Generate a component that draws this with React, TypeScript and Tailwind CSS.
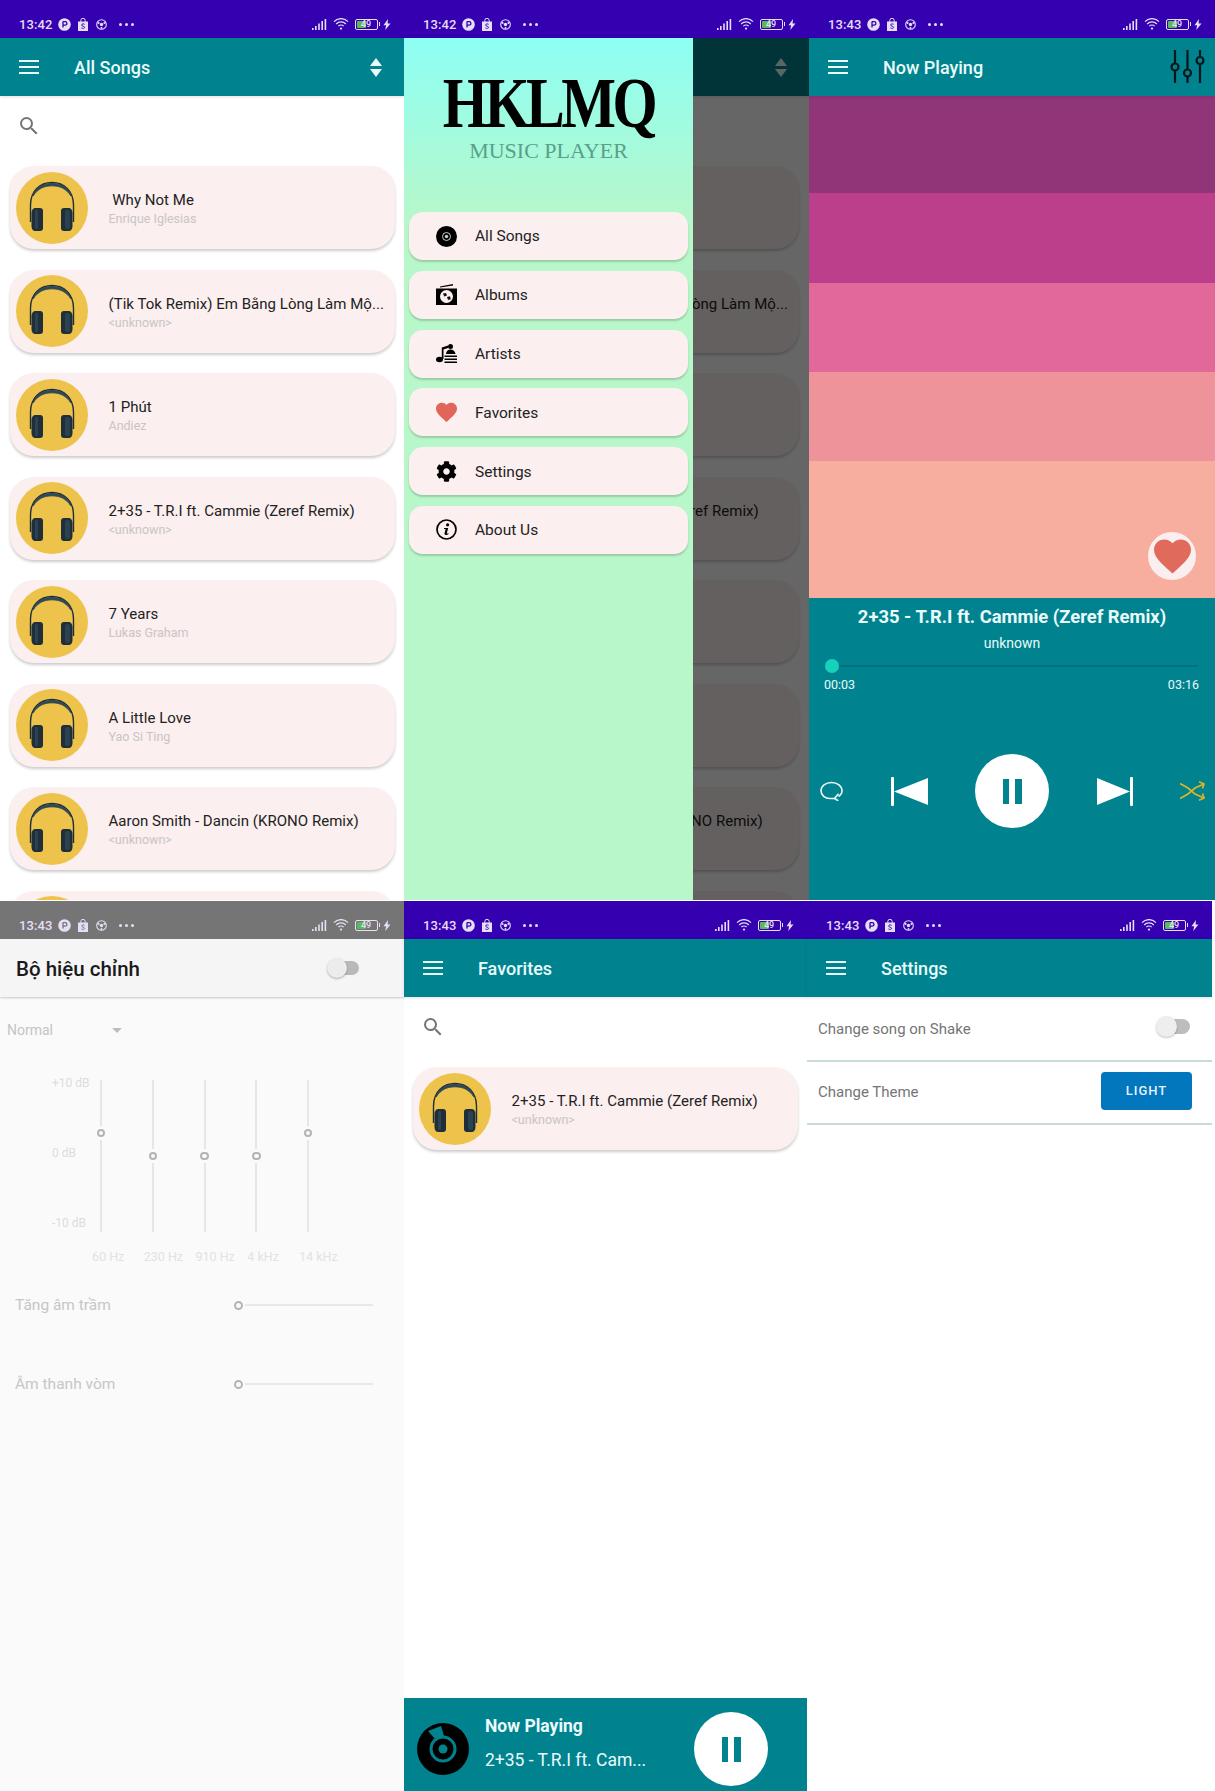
import React from "react";
import { FaCog } from "react-icons/fa";

const Roboto = "[font-family:Roboto,sans-serif]";

function StatusBar({ time, gray = false }: { time: string; gray?: boolean }) {
  return (
    <div className={`h-[38px] shrink-0 flex items-center pl-[19px] pr-[13px] pt-[10px] text-[#e6def5] ${gray ? "bg-[#757575]" : "bg-[#3400b0]"}`}>
      <span className="text-[13px] font-medium w-[39px] leading-none tracking-[0.1px]">{time}</span>
      <svg width="13" height="13" viewBox="0 0 13 13" className="shrink-0">
        <circle cx="6.5" cy="6.5" r="6.3" fill="currentColor" />
        <path d="M5 3.5v6M5 3.7h2.2a1.7 1.7 0 0 1 0 3.4H5" fill="none" stroke={gray ? "#757575" : "#3400b0"} strokeWidth="1.3" />
      </svg>
      <svg width="12" height="13" viewBox="0 0 12 13" className="ml-[6px] shrink-0">
        <path d="M1 3.5h10v9.5H1z" fill="currentColor" />
        <path d="M3.8 4V2.5a2.2 2.2 0 0 1 4.4 0V4" fill="none" stroke="currentColor" strokeWidth="1" />
        <path d="M7.6 6.3C7 5.7 4.7 5.6 4.6 7c0 1.5 3 .9 3 2.4 0 1.3-2.4 1.2-3.2.5" fill="none" stroke={gray ? "#757575" : "#3400b0"} strokeWidth="0.9" />
      </svg>
      <svg width="11" height="11" viewBox="0 0 11 11" className="ml-[7px] shrink-0">
        <circle cx="5.5" cy="5.5" r="4.8" fill="none" stroke="currentColor" strokeWidth="1.1" />
        <circle cx="5.5" cy="5.5" r="1.7" fill="currentColor" />
        <circle cx="2.6" cy="3.9" r="1" fill="currentColor" />
        <circle cx="8.4" cy="3.9" r="1" fill="currentColor" />
        <circle cx="5.5" cy="9" r="1" fill="currentColor" />
      </svg>
      <div className="ml-[12px] flex gap-[3px]">
        <span className="w-[3px] h-[3px] rounded-full bg-current" />
        <span className="w-[3px] h-[3px] rounded-full bg-current" />
        <span className="w-[3px] h-[3px] rounded-full bg-current" />
      </div>
      <div className="ml-auto flex items-center">
        <svg width="15" height="11" viewBox="0 0 15 11">
          <rect x="0" y="9" width="1.6" height="2" fill="currentColor" />
          <rect x="3" y="7" width="1.6" height="4" fill="currentColor" />
          <rect x="6.2" y="4.5" width="1.6" height="6.5" fill="currentColor" />
          <rect x="9.4" y="2" width="1.6" height="9" fill="currentColor" />
          <rect x="12.6" y="0" width="1.6" height="11" fill="currentColor" />
        </svg>
        <svg width="16" height="12" viewBox="0 0 16 12" className="ml-[6px]">
          <path d="M1 3.6a9.6 9.6 0 0 1 14 0M3.2 6a6.4 6.4 0 0 1 9.6 0M5.4 8.2a3.4 3.4 0 0 1 5.2 0" fill="none" stroke="currentColor" strokeWidth="1.2" />
          <circle cx="8" cy="10.6" r="1.1" fill="currentColor" />
        </svg>
        <div className="ml-[6px] w-[23px] h-[11px] border border-current rounded-[2px] relative flex items-center p-px">
          <span className="h-full w-[9px] bg-[#5cb85c] rounded-[1px]" />
          <span className="absolute inset-0 flex items-center justify-center text-[9px] leading-none font-medium">49</span>
        </div>
        <span className="w-[1.5px] h-[4px] bg-current ml-px" />
        <svg width="8" height="11" viewBox="0 0 8 11" className="ml-[3px]">
          <path d="M5 0 0.5 6.2h2.6L2.3 11 7.5 4.4H4.6z" fill="currentColor" />
        </svg>
      </div>
    </div>
  );
}

function AppBar({ title, right }: { title: string; right?: React.ReactNode }) {
  return (
    <div className="h-[58px] shrink-0 bg-[#00838f] flex items-center pl-[19px] text-[#e9fbfb] shadow-[0_1px_3px_rgba(0,0,0,0.12)] relative">
      <div className="w-[20px] flex flex-col gap-[4px] -mt-[1px]">
        <span className="h-[2px] bg-current" />
        <span className="h-[2px] bg-current" />
        <span className="h-[2px] bg-current" />
      </div>
      <span className="ml-[35px] text-[18px] font-medium leading-none mt-[2px]">{title}</span>
      {right}
    </div>
  );
}

function SortIcon() {
  return (
    <svg width="12" height="19" viewBox="0 0 12 19" className="ml-auto mr-[22px]">
      <path d="M6 0 12 8H0zM0 11h12L6 19z" fill="currentColor" />
    </svg>
  );
}

function SearchRow() {
  return (
    <div className="h-[70px] shrink-0 pl-[17px] pt-[18px]">
      <svg width="24" height="24" viewBox="0 0 24 24" fill="#757575">
        <path d="M15.5 14h-.79l-.28-.27A6.471 6.471 0 0 0 16 9.5 6.5 6.5 0 1 0 9.5 16c1.61 0 3.09-.59 4.23-1.57l.27.28v.79l5 4.99L20.49 19l-4.99-5zm-6 0C7.01 14 5 11.99 5 9.5S7.01 5 9.5 5 14 7.01 14 9.5 11.99 14 9.5 14z" />
      </svg>
    </div>
  );
}

function Headphones() {
  return (
    <div className="w-[72px] h-[72px] rounded-full bg-[#eec34b] shrink-0 ml-[6px]">
      <svg width="72" height="72" viewBox="0 0 72 72">
        <path d="M14.500 50V33C14.500 19 24 10.500 36 10.500S57.500 19 57.500 33v17" fill="none" stroke="#1f2f3a" strokeWidth="1.400" />
        <path d="M17 24C20 15.500 27 11.500 36 11.500S52 15.500 55 24C50 16.500 44 13.800 36 13.800S22 16.500 17 24z" fill="#2f4855" stroke="#2f4855" strokeWidth="1" />
        <path d="M15.500 41c0-3 1.500-5 4-5h4.500c2 0 3 1 3 3v17c0 2-1 3-3 3h-4.500c-2.500 0-4-2-4-5z" fill="#1f2e38" />
        <path d="M56.500 41c0-3-1.500-5-4-5H48c-2 0-3 1-3 3v17c0 2 1 3 3 3h4.500c2.500 0 4-2 4-5z" fill="#1f2e38" />
        <rect x="49" y="38" width="5" height="19" rx="2" fill="#2b4350" />
        <rect x="19" y="38" width="3" height="19" rx="1" fill="#2b4350" />
      </svg>
    </div>
  );
}

function SongCard({ title, sub, className = "" }: { title: string; sub: string; className?: string }) {
  return (
    <div className={`h-[83px] shrink-0 mx-[10px] w-[385px] rounded-[24px] bg-[#fbefef] shadow-[0_2px_3px_rgba(0,0,0,0.2)] flex items-center ${className}`}>
      <Headphones />
      <div className="ml-[20.500px] min-w-0 flex flex-col mt-[2px]">
        <span className="text-[15px] leading-[20px] text-[#222] whitespace-pre tracking-[0.03px]">{title}</span>
        <span className="text-[12.500px] leading-[16px] text-[#c9c5c5] mt-[1px] whitespace-pre">{sub}</span>
      </div>
    </div>
  );
}

const songs: [string, string][] = [
  [" Why Not Me", "Enrique Iglesias"],
  ["(Tik Tok Remix) Em Bằng Lòng Làm Mộ...", "<unknown>"],
  ["1 Phút", "Andiez"],
  ["2+35 - T.R.I ft. Cammie (Zeref Remix)", "<unknown>"],
  ["7 Years", "Lukas Graham"],
  ["A Little Love", "Yao Si Ting"],
  ["Aaron Smith - Dancin (KRONO Remix)", "<unknown>"],
  ["", ""],
];

function AllSongsBody() {
  return (
    <div className="flex-1 min-h-0 bg-white overflow-hidden flex flex-col gap-[20.5px]">
      <div className="-mb-[20.5px]">
        <SearchRow />
      </div>
      <div className="flex flex-col gap-[20.5px] shrink-0">
        {songs.map(([t, s], i) => (
          <SongCard key={i} title={t} sub={s} />
        ))}
      </div>
    </div>
  );
}

function Heart({ size, color = "#e2655a" }: { size: number; color?: string }) {
  return (
    <svg width={size} height={size} viewBox="2 3 20 18.4" fill={color}>
      <path d="M12 21.35l-1.45-1.32C5.4 15.36 2 12.28 2 8.5 2 5.42 4.42 3 7.5 3c1.74 0 3.41.81 4.5 2.09C13.09 3.81 14.76 3 16.5 3 19.58 3 22 5.42 22 8.5c0 3.78-3.4 6.86-8.55 11.54L12 21.35z" />
    </svg>
  );
}

const drawerItems: [string, React.ReactNode][] = [
  [
    "All Songs",
    <svg width="21" height="21" viewBox="0 0 21 21">
      <circle cx="10.500" cy="10.500" r="10.500" fill="#000" />
      <circle cx="10.500" cy="10.500" r="4" fill="none" stroke="#ddd" strokeWidth="0.900" />
      <circle cx="10.500" cy="10.500" r="1.700" fill="#ccc" />
    </svg>,
  ],
  [
    "Albums",
    <svg width="21" height="21" viewBox="0 0 21 21">
      <path d="M4 2.500 17 0v1.500L4 3.500z" fill="#000" />
      <path d="M0 4.500h21V21H0z" fill="#000" />
      <circle cx="10.500" cy="12.500" r="6.500" fill="#fbefef" />
      <path d="M7 9.500 10 9l1 2.500-2.800 1zM11 13l3-.8.8 3-2.800.8z" fill="#111" />
    </svg>,
  ],
  [
    "Artists",
    <svg width="21" height="19" viewBox="0 0 21 19">
      <ellipse cx="3.500" cy="15.500" rx="3.500" ry="2.800" fill="#000" />
      <path d="M5.800 15V3.500L12 1.500v2.500L7.500 5.500V15z" fill="#000" />
      <circle cx="14.500" cy="2.500" r="2.500" fill="#000" />
      <path d="M10 10c0-3 2-4.500 4.500-4.500S19 7 19.500 10z" fill="#000" />
      <path d="M8.500 11.500H21v1.600H8.500zM8.500 14.500H21v1.600H8.500zM8.500 17.400H21V19H8.500z" fill="#000" />
    </svg>,
  ],
  ["Favorites", <Heart size={21} />],
  ["Settings", <FaCog size={21} color="#000" />],
  [
    "About Us",
    <svg width="21" height="21" viewBox="0 0 21 21">
      <circle cx="10.500" cy="10.500" r="9.500" fill="none" stroke="#000" strokeWidth="1.700" />
      <circle cx="11.600" cy="5.800" r="1.600" fill="#000" />
      <path d="M8 9h4.200L10.800 14.300c-.1.500.4.600 1.500-.3l.2.900c-1.300 1.300-4.300 1.700-4-.3l1.100-4.600H8z" fill="#000" />
    </svg>,
  ],
];

function Drawer() {
  return (
    <div className="absolute left-0 top-0 bottom-0 w-[289px] bg-[linear-gradient(180deg,#8dfff4,#b8f7c9_185px)] flex flex-col">
      <div className="h-[174px] shrink-0 flex flex-col items-center pt-[37px]">
        <span className="[font-family:'Liberation_Serif',serif] font-bold text-[58px] leading-[56px] tracking-[-3.500px] text-black scale-y-[1.25]">
          HKLMQ
        </span>
        <span className="[font-family:'Liberation_Serif',serif] text-[22px] leading-[24px] text-[#5a9f8a] mt-[8px]">
          MUSIC PLAYER
        </span>
      </div>
      <div className="flex flex-col gap-[10.8px] px-[5px]">
        {drawerItems.map(([label, icon]) => (
          <div key={label} className="h-[48px] w-[279px] rounded-[14px] bg-[#fbefef] shadow-[0_2px_2px_rgba(0,0,0,0.18)] flex items-center">
            <div className="ml-[27px] w-[21px] flex justify-center">{icon}</div>
            <span className="ml-[18px] text-[15.500px] text-[#222] mt-[2px]">{label}</span>
          </div>
        ))}
      </div>
    </div>
  );
}

function PauseCircle() {
  return (
    <div className="w-[74px] h-[74px] rounded-full bg-white flex items-center justify-center gap-[6px] shrink-0">
      <span className="w-[6.500px] h-[25px] bg-[#00838f]" />
      <span className="w-[6.500px] h-[25px] bg-[#00838f]" />
    </div>
  );
}

function NowPlaying() {
  return (
    <div className="w-[406px] shrink-0 flex flex-col bg-[#00838f]">
      <StatusBar time="13:43" />
      <AppBar
        title="Now Playing"
        right={
          <svg width="40" height="36" viewBox="0 0 40 36" className="ml-auto mr-[5px]">
            <g stroke="#07161a" strokeWidth="2.200" fill="none">
              <path d="M5 1v33M17.500 1v33M30 1v33" />
              <circle cx="5" cy="18" r="3.500" fill="#00838f" />
              <circle cx="17.500" cy="24" r="3.500" fill="#00838f" />
              <circle cx="30" cy="11.500" r="3.500" fill="#00838f" />
            </g>
          </svg>
        }
      />
      <div className="h-[97px] bg-[#903578]" />
      <div className="h-[90px] bg-[#bb3f8b]" />
      <div className="h-[89px] bg-[#e2689a]" />
      <div className="h-[89px] bg-[#ee9399]" />
      <div className="h-[137px] bg-[#f7ae9f] relative">
        <div className="absolute left-[339px] top-[71px] w-[48px] h-[48px] rounded-full bg-[#fbeeee] flex items-center justify-center">
          <Heart size={37} color="#e06b5c" />
        </div>
      </div>
      <div className="flex-1 flex flex-col text-[#eafafa]">
        <div className="mt-[8px] text-center text-[18.400px] leading-[22px] font-bold">2+35 - T.R.I ft. Cammie (Zeref Remix)</div>
        <div className="mt-[5px] text-center text-[14px] leading-[20px]">unknown</div>
        <div className="mt-[6px] ml-[16px] mr-[17px] h-[14px] flex items-center relative">
          <span className="h-[1.500px] w-full bg-[#00727e]" />
          <span className="absolute left-0 top-0 w-[14px] h-[14px] rounded-full bg-[#16d2bb]" />
        </div>
        <div className="mt-[4px] mx-[15px] flex justify-between text-[12.500px] leading-[16px] pr-[1px]">
          <span>00:03</span>
          <span>03:16</span>
        </div>
        <div className="mt-[61px] pl-[11px] pr-[10px] flex items-center justify-between">
          <svg width="23" height="20" viewBox="0 0 23 20" fill="none" stroke="#eafafa" strokeWidth="1.600">
            <path d="M18.500 15.500C21 14 22 12 22 9.800 22 5 17.500 1.500 11.500 1.500S1 5 1 9.800c0 4.500 4 7.700 9 7.700h4.500" />
            <path d="M18.500 12.800 14.500 17.500l3.800 2.300" />
          </svg>
          <svg width="37" height="29" viewBox="0 0 37 29" fill="#fff">
            <rect x="0" y="0" width="3" height="29" rx="1" />
            <path d="M3 14.500 37 1v27z" />
          </svg>
          <PauseCircle />
          <svg width="36" height="29" viewBox="0 0 36 29" fill="#fff">
            <rect x="33" y="0" width="3" height="29" rx="1" />
            <path d="M33 14.500 0 1v27z" />
          </svg>
          <svg width="25" height="20" viewBox="0 0 25 20" fill="none" stroke="#dcb426" strokeWidth="1.700">
            <path d="M0 17.500 8 13l7-6 9-4M0 2.500 8 7l7 6 9 4" />
            <path d="M19 .800 24 3l-1.500 4.500M19 19.200 24 17l-1.500-4.500" />
          </svg>
        </div>
      </div>
    </div>
  );
}

function VBand({ label, top }: { label: string; top: string }) {
  return (
    <div className="w-[51.750px] shrink-0 flex flex-col">
      <div className="ml-[8px] h-[152px] w-[2px] bg-[#e6e6e6] relative mt-[4px]">
        <span className={`absolute -left-[6px] w-[14px] h-[14px] bg-[#fafafa] flex items-center justify-center ${top}`}>
          <span className="w-[8.500px] h-[8.500px] rounded-full border-[2px] border-[#b4b4b4]" />
        </span>
      </div>
      <span className="mt-[17px] text-[12.500px] leading-[16px] text-[#e2e2e2] whitespace-nowrap">{label}</span>
    </div>
  );
}

function HRow({ label }: { label: string }) {
  return (
    <div className="h-[40px] flex items-center pl-[15px] pr-[31px]">
      <span className="text-[15.500px] text-[#c6c6c6] mt-[2px]">{label}</span>
      <div className="ml-auto w-[139px] flex items-center">
        <span className="w-[9px] h-[9px] rounded-full border-[2px] border-[#b4b4b4] shrink-0" />
        <span className="ml-[2px] h-[2px] flex-1 bg-[#e8e8e8]" />
      </div>
    </div>
  );
}

function Equalizer() {
  return (
    <div className="w-[404px] shrink-0 flex flex-col bg-[#fafafa]">
      <StatusBar time="13:43" gray />
      <div className="h-[58px] shrink-0 bg-[#f5f5f5] shadow-[0_1px_2px_rgba(0,0,0,0.2)] flex items-center pl-[16px] relative">
        <span className="text-[20.500px] font-medium text-[#1a1a1a] leading-none mt-[2px]">Bộ hiệu chỉnh</span>
        <div className="ml-auto mr-[45px] w-[32px] h-[20px] relative flex items-center">
          <span className="absolute right-0 left-[8px] h-[14px] rounded-full bg-[#b9b9b9]" />
          <span className="absolute left-0 w-[20px] h-[20px] rounded-full bg-[#ececec] shadow-[0_1px_2px_rgba(0,0,0,0.3)]" />
        </div>
      </div>
      <div className="h-[66px] shrink-0 pl-[7px] flex items-center">
        <span className="text-[14px] text-[#c4c4c4] w-[105px]">Normal</span>
        <span className="w-0 h-0 border-x-[5px] border-x-transparent border-t-[5px] border-t-[#bdbdbd]" />
      </div>
      <div className="flex mt-[13px] pl-[52px]">
        <div className="w-[40px] h-[156px] -mt-[1px] shrink-0 flex flex-col justify-between text-[12px] leading-[16px] text-[#dcdcdc]">
          <span>+10 dB</span>
          <span>0 dB</span>
          <span>-10 dB</span>
        </div>
        <VBand label="60 Hz" top="top-[46px]" />
        <VBand label="230 Hz" top="top-[69px]" />
        <VBand label="910 Hz" top="top-[69px]" />
        <VBand label="4 kHz" top="top-[69px]" />
        <VBand label="14 kHz" top="top-[46px]" />
      </div>
      <div className="mt-[20px]">
        <HRow label="Tăng âm trầm" />
      </div>
      <div className="mt-[39px]">
        <HRow label="Âm thanh vòm" />
      </div>
    </div>
  );
}

function Favorites() {
  return (
    <div className="w-[403px] shrink-0 flex flex-col bg-white">
      <StatusBar time="13:43" />
      <AppBar title="Favorites" />
      <SearchRow />
      <div className="flex-1">
        <SongCard title="2+35 - T.R.I ft. Cammie (Zeref Remix)" sub="<unknown>" className="-ml-[-9px]" />
      </div>
      <div className="h-[93px] shrink-0 bg-[#00838f] flex items-center pl-[13px] pt-[9px] text-[#eafafa]">
        <svg width="52" height="52" viewBox="0 0 52 52" className="shrink-0">
          <circle cx="26" cy="26" r="26" fill="#000" />
          <circle cx="26" cy="26" r="12" fill="none" stroke="#00838f" strokeWidth="3" />
          <circle cx="26" cy="26" r="4.500" fill="#00838f" />
          <path d="M11 8 24 3l3 10-9 3z" fill="#00838f" />
        </svg>
        <div className="ml-[16px] flex flex-col w-[195px] -mt-[12px]">
          <span className="text-[17.500px] leading-[20px] font-bold">Now Playing</span>
          <span className="mt-[14px] text-[17.500px] leading-[20px] whitespace-nowrap">2+35 - T.R.I ft. Cam...</span>
        </div>
        <div className="ml-[14px]">
          <PauseCircle />
        </div>
      </div>
    </div>
  );
}

function Settings() {
  return (
    <div className="w-[405px] shrink-0 flex flex-col bg-white">
      <StatusBar time="13:43" />
      <AppBar title="Settings" />
      <div className="h-[65px] shrink-0 border-b-[2px] border-[#c8dada] flex items-center pl-[11px] pr-[22px]">
        <span className="text-[15px] text-[#757575] mt-[1px]">Change song on Shake</span>
        <div className="ml-auto w-[34px] h-[22px] relative flex items-center -mt-[5px]">
          <span className="absolute right-0 left-[10px] h-[15px] rounded-full bg-[#bdbdbd]" />
          <span className="absolute left-0 w-[21px] h-[21px] rounded-full bg-[#eeeeee] shadow-[0_1px_2px_rgba(0,0,0,0.25)]" />
        </div>
      </div>
      <div className="h-[63px] shrink-0 border-b-[2px] border-[#c8dada] flex items-center pl-[11px] pr-[20px]">
        <span className="text-[15px] text-[#757575]">Change Theme</span>
        <span className="ml-auto w-[91px] h-[38px] rounded-[4px] bg-[#0277bd] text-[#e6f2fa] text-[13px] font-medium tracking-[1px] flex items-center justify-center -mt-[3px]">
          LIGHT
        </span>
      </div>
    </div>
  );
}

export default function App() {
  return (
    <div className={`w-[1215px] h-[1791px] overflow-hidden bg-white flex flex-col ${Roboto}`}>
      <div className="flex h-[900px] mb-px shrink-0">
        <div className="w-[404px] shrink-0 flex flex-col">
          <StatusBar time="13:42" />
          <AppBar title="All Songs" right={<SortIcon />} />
          <AllSongsBody />
        </div>
        <div className="w-[405px] shrink-0 flex flex-col">
          <StatusBar time="13:42" />
          <div className="flex-1 min-h-0 relative overflow-hidden flex flex-col">
            <AppBar title="All Songs" right={<SortIcon />} />
            <AllSongsBody />
            <div className="absolute inset-0 bg-black/60" />
            <Drawer />
          </div>
        </div>
        <NowPlaying />
      </div>
      <div className="flex h-[890px] shrink-0">
        <Equalizer />
        <Favorites />
        <Settings />
      </div>
    </div>
  );
}
